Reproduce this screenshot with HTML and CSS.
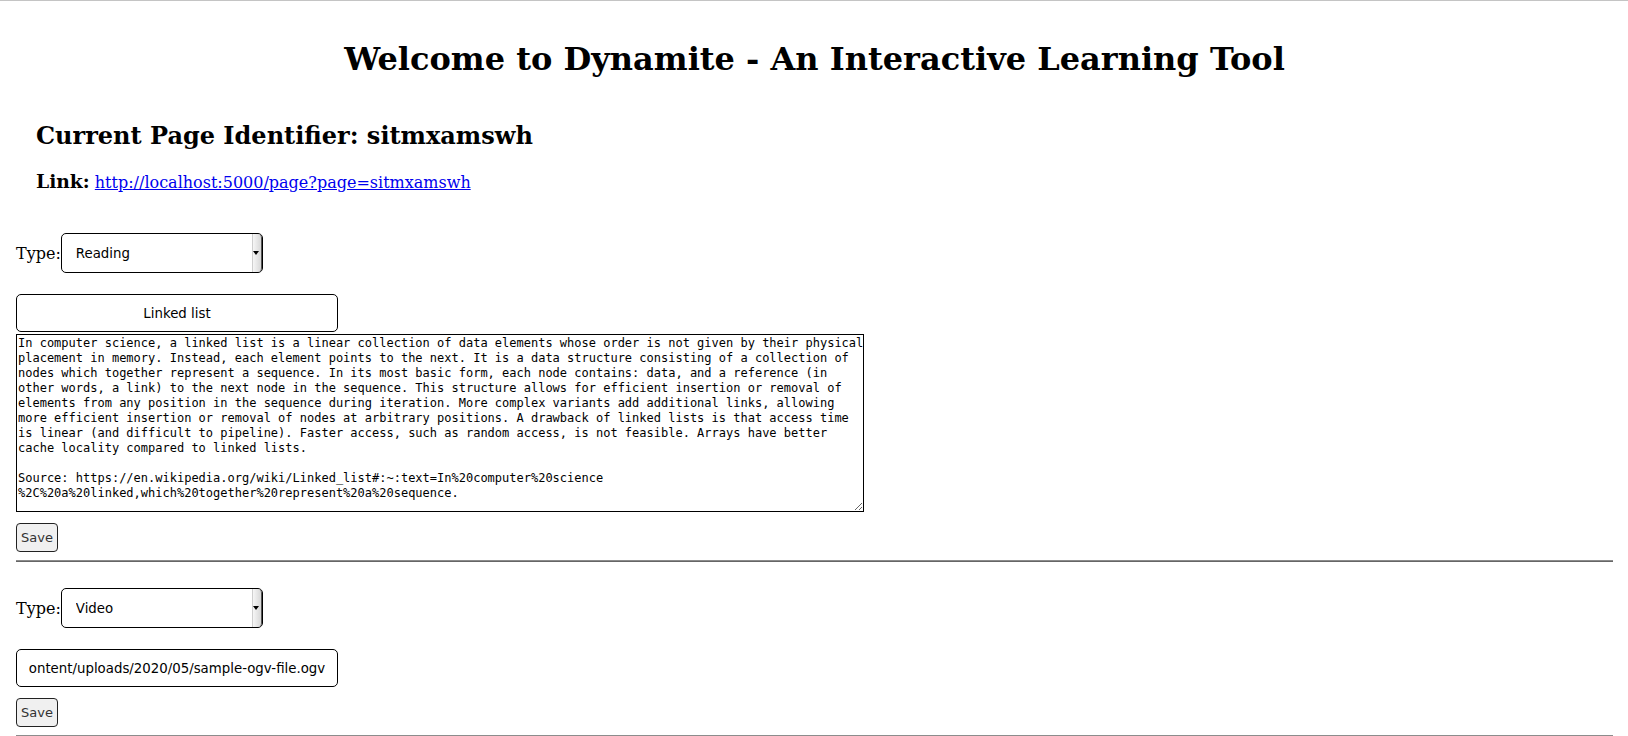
FILE: index.html
```html
<!DOCTYPE html>
<html lang="en">
<head>
<meta charset="utf-8">
<title>Dynamite</title>
<link rel="stylesheet" href="styles.css">
</head>
<body>
<div class="page">
  <h1 class="title">Welcome to Dynamite - An Interactive Learning Tool</h1>
  <div class="meta">
    <h2 class="page-id">Current Page Identifier: sitmxamswh</h2>
    <p class="link-row"><b class="link-label">Link:</b> <a href="#">http://localhost:5000/page?page=sitmxamswh</a></p>
  </div>

  <section class="block">
    <div class="type-row">
      <label class="type-label">Type:</label>
      <span class="select-wrap"><select class="type-select"><option>Reading</option><option>Video</option></select></span>
    </div>
    <input class="title-input" type="text" value="Linked list">
    <textarea class="body-text" wrap="off">In computer science, a linked list is a linear collection of data elements whose order is not given by their physical
placement in memory. Instead, each element points to the next. It is a data structure consisting of a collection of
nodes which together represent a sequence. In its most basic form, each node contains: data, and a reference (in
other words, a link) to the next node in the sequence. This structure allows for efficient insertion or removal of
elements from any position in the sequence during iteration. More complex variants add additional links, allowing
more efficient insertion or removal of nodes at arbitrary positions. A drawback of linked lists is that access time
is linear (and difficult to pipeline). Faster access, such as random access, is not feasible. Arrays have better
cache locality compared to linked lists.

Source: https://en.wikipedia.org/wiki/Linked_list#:~:text=In%20computer%20science
%2C%20a%20linked,which%20together%20represent%20a%20sequence.</textarea>
    <button class="save" type="button">Save</button>
  </section>
  <hr class="divider">

  <section class="block block-video">
    <div class="type-row">
      <label class="type-label">Type:</label>
      <span class="select-wrap"><select class="type-select"><option>Video</option><option>Reading</option></select></span>
    </div>
    <input class="title-input" type="text" value="ontent/uploads/2020/05/sample-ogv-file.ogv">
    <button class="save" type="button">Save</button>
  </section>
  <hr class="divider">
</div>
</body>
</html>
```

FILE: styles.css
```css
html, body {
  margin: 0;
  padding: 0;
  background: #fff;
}

body {
  font-family: "DejaVu Serif", serif;
  font-size: 16px;
  color: #000;
}

.page {
  border-top: 1px solid #c4c4c4;
  padding: 0 15px 0 16px;
}

.title {
  margin: 40px 0 0;
  font-size: 32px;
  line-height: 37px;
  font-weight: bold;
  text-align: center;
}

.meta {
  padding-left: 20px;
}

.page-id {
  margin: 44px 0 0;
  font-size: 24px;
  line-height: 28px;
  font-weight: bold;
}

.link-row {
  margin: 22px 0 0;
  font-size: 16px;
  line-height: 19px;
}

.link-label {
  font-size: 18.72px;
}

.link-row a {
  color: #0000ee;
}

.block {
  display: flex;
  flex-direction: column;
  align-items: flex-start;
}

.type-row {
  display: flex;
  align-items: center;
  margin-top: 41px;
}

.block-video .type-row {
  margin-top: 26px;
}

.type-label {
  font-size: 16px;
  line-height: 19px;
  margin-right: 0;
}

.select-wrap {
  position: relative;
  display: block;
}

.type-select {
  appearance: none;
  -webkit-appearance: none;
  display: block;
  width: 202px;
  height: 40px;
  margin: 0;
  padding: 0 14px 0 14px;
  border: 1px solid #000;
  border-radius: 5px;
  background: #fff;
  font-family: "DejaVu Sans", sans-serif;
  font-size: 13.33px;
  color: #000;
}

.select-wrap::after {
  content: "";
  position: absolute;
  top: 1px;
  right: 1px;
  bottom: 1px;
  width: 8px;
  background: linear-gradient(to right, #f6f6f6, #d8d8d8);
  border-left: 1px solid #cfcfcf;
  border-right: 1px solid #555;
  border-radius: 0 4px 4px 0;
}

.select-wrap::before {
  content: "";
  position: absolute;
  z-index: 1;
  right: 4px;
  top: 18px;
  border-left: 3px solid transparent;
  border-right: 3px solid transparent;
  border-top: 4px solid #000;
}

.title-input {
  display: block;
  box-sizing: border-box;
  width: 322px;
  height: 38px;
  margin: 21px 0 0;
  padding: 0 4px;
  border: 1px solid #000;
  border-radius: 5px;
  background: #fff;
  font-family: "DejaVu Sans", sans-serif;
  font-size: 13.33px;
  color: #000;
  text-align: center;
}

.body-text {
  display: block;
  box-sizing: border-box;
  width: 848px;
  height: 178px;
  margin: 2px 0 0;
  padding: 1px 1px;
  border: 1px solid #000;
  font-family: "DejaVu Sans Mono", monospace;
  font-size: 12px;
  line-height: 15px;
  color: #000;
  overflow: hidden;
  resize: both;
}

.save {
  display: block;
  box-sizing: border-box;
  width: 42px;
  height: 29px;
  margin: 11px 0 0;
  padding: 0;
  border: 1px solid #222;
  border-radius: 4px;
  background: #f0f0f0;
  font-family: "DejaVu Sans", sans-serif;
  font-size: 13px;
  color: #333;
}

.divider {
  margin: 8px 0 0;
  height: 0;
  border: 0;
  border-top: 1px solid #8c8c8c;
  border-bottom: 1px solid #666;
}
```
